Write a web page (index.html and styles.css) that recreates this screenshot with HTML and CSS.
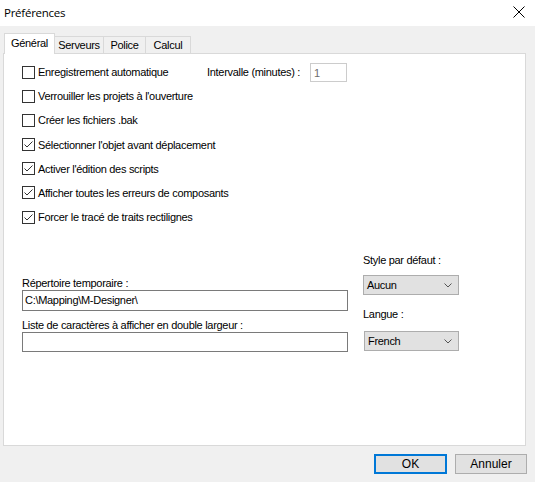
FILE: index.html
```html
<!DOCTYPE html>
<html lang="fr">
<head>
<meta charset="utf-8">
<title>Préférences</title>
<link rel="stylesheet" href="styles.css">
</head>
<body>
<div class="window">
  <div class="titlebar">
    <span class="title">Préférences</span>
    <svg class="close" width="12" height="12" viewBox="0 0 12 12"><path d="M0.5 0.5 L11.5 11.5 M11.5 0.5 L0.5 11.5" stroke="#000" stroke-width="1" fill="none"/></svg>
  </div>
  <div class="body">
    <div class="tabs">
      <div class="tab active">Général</div>
      <div class="tab t-serv">Serveurs</div>
      <div class="tab t-pol">Police</div>
      <div class="tab t-calc">Calcul</div>
    </div>
    <div class="panel">
      <div class="checks">
        <div class="row">
          <label class="check first"><span class="box"></span>Enregistrement automatique</label>
          <span class="lbl">Intervalle (minutes) :</span>
          <span class="num">1</span>
        </div>
        <div class="row"><label class="check"><span class="box"></span>Verrouiller les projets à l'ouverture</label></div>
        <div class="row"><label class="check"><span class="box"></span>Créer les fichiers .bak</label></div>
        <div class="row"><label class="check"><span class="box on"><svg width="11" height="11" viewBox="0 0 11 11"><path d="M1.5 5.5 L4 8 L9.5 2.5" stroke="#333" stroke-width="1" fill="none"/></svg></span>Sélectionner l'objet avant déplacement</label></div>
        <div class="row"><label class="check"><span class="box on"><svg width="11" height="11" viewBox="0 0 11 11"><path d="M1.5 5.5 L4 8 L9.5 2.5" stroke="#333" stroke-width="1" fill="none"/></svg></span>Activer l'édition des scripts</label></div>
        <div class="row"><label class="check"><span class="box on"><svg width="11" height="11" viewBox="0 0 11 11"><path d="M1.5 5.5 L4 8 L9.5 2.5" stroke="#333" stroke-width="1" fill="none"/></svg></span>Afficher toutes les erreurs de composants</label></div>
        <div class="row"><label class="check"><span class="box on"><svg width="11" height="11" viewBox="0 0 11 11"><path d="M1.5 5.5 L4 8 L9.5 2.5" stroke="#333" stroke-width="1" fill="none"/></svg></span>Forcer le tracé de traits rectilignes</label></div>
      </div>
      <div class="lower">
        <div class="left">
          <div class="flabel">Répertoire temporaire :</div>
          <div class="field">C:\Mapping\M-Designer\</div>
          <div class="flabel second">Liste de caractères à afficher en double largeur :</div>
          <div class="field empty"></div>
        </div>
        <div class="right">
          <div class="flabel">Style par défaut :</div>
          <div class="select">Aucun<svg class="chev" width="8" height="5" viewBox="0 0 8 5"><path d="M0.5 0.5 L4 4 L7.5 0.5" stroke="#555" stroke-width="1" fill="none"/></svg></div>
          <div class="flabel lang">Langue :</div>
          <div class="select">French<svg class="chev" width="8" height="5" viewBox="0 0 8 5"><path d="M0.5 0.5 L4 4 L7.5 0.5" stroke="#555" stroke-width="1" fill="none"/></svg></div>
        </div>
      </div>
    </div>
    <div class="buttons">
      <div class="btn default">OK</div>
      <div class="btn">Annuler</div>
    </div>
  </div>
</div>
</body>
</html>
```
FILE: styles.css
```css
html, body {
  margin: 0;
  padding: 0;
}
body {
  width: 535px;
  height: 482px;
  overflow: hidden;
  background: #f0f0f0;
  font-family: "Liberation Sans", Arial, sans-serif;
  font-size: 11px;
  letter-spacing: -0.3px;
  color: #000;
}
.window {
  width: 535px;
  height: 482px;
  display: flex;
  flex-direction: column;
}
.titlebar {
  height: 26px;
  background: #fff;
  display: flex;
  align-items: center;
  justify-content: space-between;
  padding: 0 10px 2px 4px;
  box-sizing: border-box;
}
.title {
  font-family: "Open Sans", "Noto Sans", sans-serif;
  font-size: 11.5px;
  letter-spacing: -0.25px;
}
.close {
  display: block;
}
.body {
  flex: 1;
  padding: 8px 9px 0 3px;
  display: flex;
  flex-direction: column;
}
.tabs {
  display: flex;
  align-items: flex-end;
  height: 19px;
  padding-left: 1px;
  position: relative;
  z-index: 1;
}
.tab {
  height: 17px;
  line-height: 16px;
  border: 1px solid #d9d9d9;
  border-bottom: none;
  background: #f0f0f0;
  margin-left: -1px;
  box-sizing: border-box;
  text-align: center;
}
.tab.active {
  width: 51px;
  height: 21px;
  line-height: 19px;
  margin-bottom: -1px;
  background: #fff;
  margin-left: 0;
}
.tab.t-serv { width: 50px; }
.tab.t-pol { width: 43px; }
.tab.t-calc { width: 46px; }
.panel {
  height: 393px;
  box-sizing: border-box;
  border: 1px solid #d9d9d9;
  background: #fff;
  padding: 6px 0 0 18px;
}
.checks {
  display: flex;
  flex-direction: column;
}
.row {
  height: 24.17px;
  display: flex;
  align-items: center;
}
.check {
  display: flex;
  align-items: center;
}
.check.first {
  width: 185px;
}
.box {
  width: 13px;
  height: 13px;
  box-sizing: border-box;
  border: 1px solid #333;
  background: #fff;
  margin-right: 3px;
  display: flex;
  align-items: center;
  justify-content: center;
}
.box svg {
  display: block;
}
.num {
  margin-left: 10px;
  width: 37px;
  height: 19px;
  box-sizing: border-box;
  border: 1px solid #ccc;
  background: #fff;
  color: #6d6d6d;
  padding: 3px 0 0 3px;
  line-height: 13px;
}
.lower {
  display: flex;
  align-items: flex-start;
  margin-top: 24px;
}
.left {
  width: 326px;
  padding-top: 23px;
}
.flabel {
  line-height: 14px;
}
.field {
  height: 21px;
  box-sizing: border-box;
  border: 1px solid #7a7a7a;
  background: #fff;
  line-height: 19px;
  padding-left: 2px;
}
.field.empty {
  height: 20px;
}
.flabel.second {
  margin-top: 7px;
}
.right {
  margin-left: 15px;
  width: 96px;
}
.select {
  margin-top: 8px;
  height: 20px;
  box-sizing: border-box;
  border: 1px solid #adadad;
  background: #e1e1e1;
  display: flex;
  align-items: center;
  justify-content: space-between;
  padding: 0 6px 0 3px;
}
.flabel.lang {
  margin-top: 12px;
}
.lang + .select {
  margin-left: 1px;
  margin-top: 10px;
}
.chev {
  display: block;
}
.buttons {
  display: flex;
  justify-content: flex-end;
  gap: 8px;
  margin-top: 8px;
  margin-right: -1px;
}
.btn {
  width: 72px;
  height: 20px;
  box-sizing: border-box;
  border: 1px solid #adadad;
  background: #e1e1e1;
  display: flex;
  align-items: center;
  justify-content: center;
  font-size: 12px;
  letter-spacing: 0;
}
.btn.default {
  width: 73px;
  border: 2px solid #0078d7;
}
```
